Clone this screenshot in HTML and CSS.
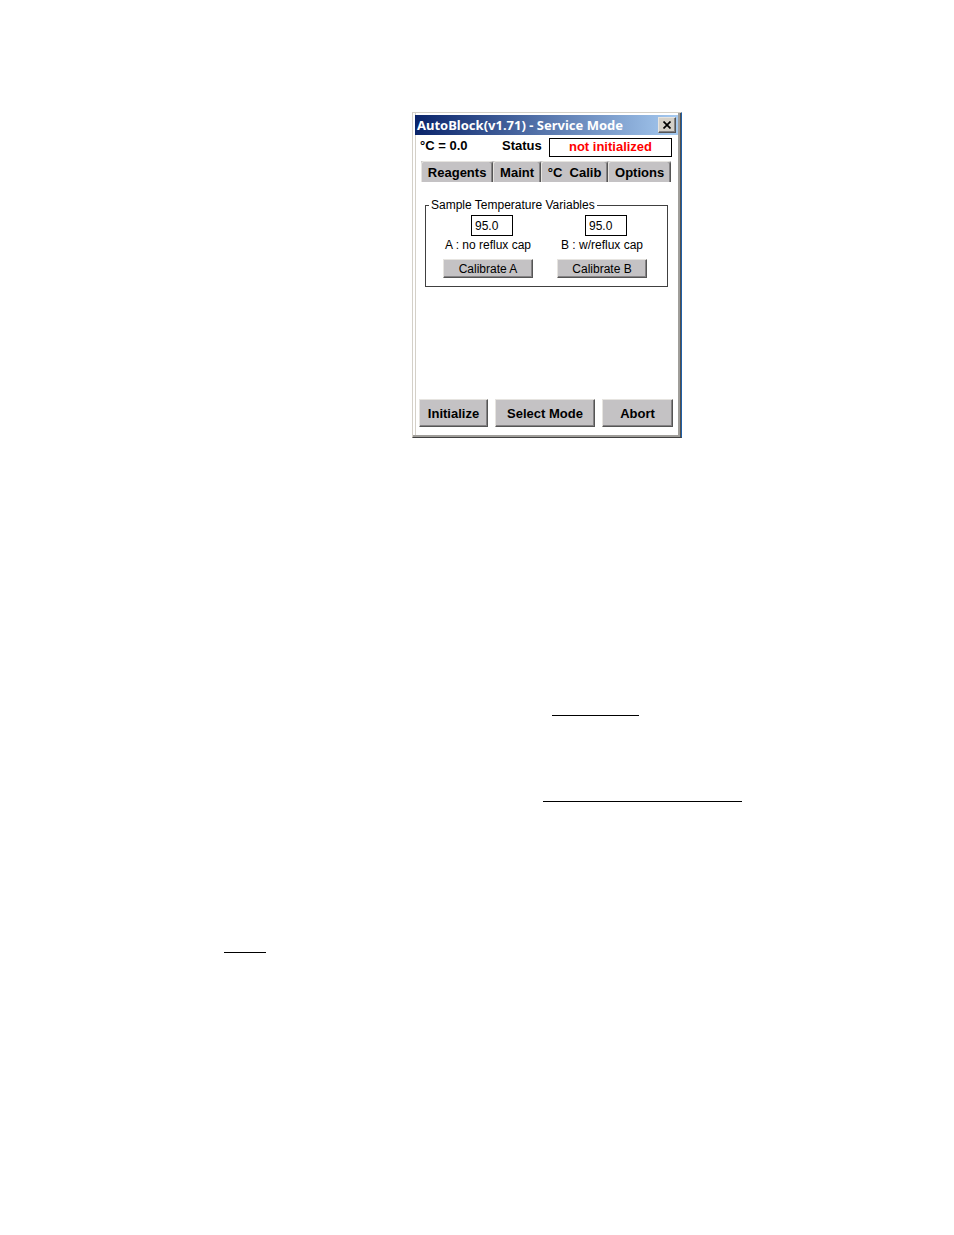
FILE: index.html
```html
<!DOCTYPE HTML>
<html lang="en">
<head>
	<meta charset="utf-8">
	<title>AutoBlock(v1.71) - Service Mode</title>
	<link rel="stylesheet" href="styles.css">
</head>
<body>

<main class="page">

	<section class="window">
		<header class="titlebar">
			<h1>AutoBlock(v1.71) - Service Mode</h1>
			<button class="close" type="button" aria-label="Close">
				<svg width="8" height="8" viewBox="0 0 8 8"><path d="M0.5 0.5 L7.5 7.5 M7.5 0.5 L0.5 7.5" stroke="#000" stroke-width="1.7"/></svg>
			</button>
		</header>

		<div class="statusbar">
			<span class="temp">&deg;C = 0.0</span>
			<span class="label">Status</span>
			<output class="state">not initialized</output>
		</div>

		<nav class="tabs">
			<button class="tab" type="button">Reagents</button>
			<button class="tab" type="button">Maint</button>
			<button class="tab" type="button">&deg;C&nbsp; Calib</button>
			<button class="tab" type="button">Options</button>
		</nav>

		<fieldset class="variables">
			<legend>Sample Temperature Variables</legend>
			<div class="variable">
				<input id="tempA" type="text" value="95.0">
				<label for="tempA">A : no reflux cap</label>
				<button class="calibrate" type="button">Calibrate A</button>
			</div>
			<div class="variable">
				<input id="tempB" type="text" value="95.0">
				<label for="tempB">B : w/reflux cap</label>
				<button class="calibrate" type="button">Calibrate B</button>
			</div>
		</fieldset>

		<footer class="actions">
			<button class="initialize" type="button">Initialize</button>
			<button class="select" type="button">Select Mode</button>
			<button class="abort" type="button">Abort</button>
		</footer>
	</section>

	<hr class="rule first">
	<hr class="rule second">
	<hr class="rule third">

</main>

</body>
</html>
```
FILE: styles.css
```css
* {
	box-sizing: border-box;
}

body {
	margin: 0;
	background: #fff;
	color: #000;
	font-family: "Liberation Sans", Arial, sans-serif;
	font-size: 12px;
}

button {
	padding: 0;
	font-family: inherit;
	color: #000;
	background: #c4c2c4;
	border: 1px solid;
	border-color: #e6e4e0 #555 #555 #e6e4e0;
	box-shadow: inset -1px -1px #858385;
}

.page {
	padding: 112px 0;
}

/* dialog window */
.window {
	display: flex;
	flex-direction: column;
	width: 270px;
	min-height: 326px;
	margin-left: 412px;
	padding: 2px;
	border: 1px solid;
	border-color: #d4d0c8 #2060a8 #404040 #d4d0c8;
	box-shadow: inset -1px 0 #505050, inset -3px -2px #a09e9a, inset 2px 0 #fff, inset 3px 0 #d4d0c8;
}

.titlebar {
	display: flex;
	align-items: center;
	justify-content: space-between;
	height: 20px;
	margin-right: 1px;
	padding: 0 2px;
	background: linear-gradient(to right, #0a246a, #a6caf0);
}

.titlebar h1 {
	margin: 0;
	font-family: "Noto Sans", Tahoma, sans-serif;
	font-size: 13px;
	line-height: 20px;
	color: #fff;
	white-space: nowrap;
}

.close {
	display: flex;
	align-items: center;
	justify-content: center;
	width: 18px;
	height: 16px;
	background: #d4d0c8;
}

.statusbar {
	display: flex;
	align-items: flex-start;
	height: 26px;
	padding: 3px 7px 0 5px;
	font-size: 13px;
	font-weight: bold;
	line-height: 16px;
}

.temp {
	width: 82px;
}

.label {
	flex: 1;
}

.state {
	width: 123px;
	height: 19px;
	border: 1px solid #000;
	line-height: 15px;
	text-align: center;
	color: #f00;
}

.tabs {
	display: flex;
	height: 21px;
	margin: 0 8px 0 6px;
	background: #c4c2c4;
}

.tab {
	flex: auto;
	font-size: 13px;
	font-weight: bold;
	border-bottom: 0;
	border-radius: 3px 3px 0 0;
	box-shadow: inset -1px 0 #858385;
	white-space: nowrap;
}

.variables {
	display: flex;
	justify-content: space-between;
	margin: 15px 11px 0 10px;
	padding: 2px 19px 8px 16px;
	border: 1px solid #404040;
}

.variables legend {
	margin-left: -13px;
	padding: 0 2px;
	line-height: 16px;
}

.variable {
	display: flex;
	flex-direction: column;
	align-items: center;
	width: 92px;
}

.variable input {
	width: 42px;
	height: 21px;
	margin-left: 8px;
	padding: 0 3px;
	border: 1px solid #000;
	font: inherit;
}

.variable label {
	margin: 1px 0 6px;
	line-height: 16px;
	white-space: nowrap;
}

.calibrate {
	width: 90px;
	height: 19px;
	font-size: 12px;
}

.actions {
	display: flex;
	gap: 7px;
	margin: auto 6px 8px 4px;
}

.actions button {
	height: 28px;
	font-size: 13px;
	font-weight: bold;
}

.initialize {
	width: 69px;
}

.select {
	flex: 1;
}

.abort {
	width: 71px;
}

/* underlines left in the body copy */
.rule {
	height: 1px;
	margin: 0;
	border: 0;
	background: #000;
}

.first {
	width: 87px;
	margin: 277px 0 0 552px;
}

.second {
	width: 199px;
	margin: 85px 0 0 543px;
}

.third {
	width: 42px;
	margin: 150px 0 0 224px;
}
```
